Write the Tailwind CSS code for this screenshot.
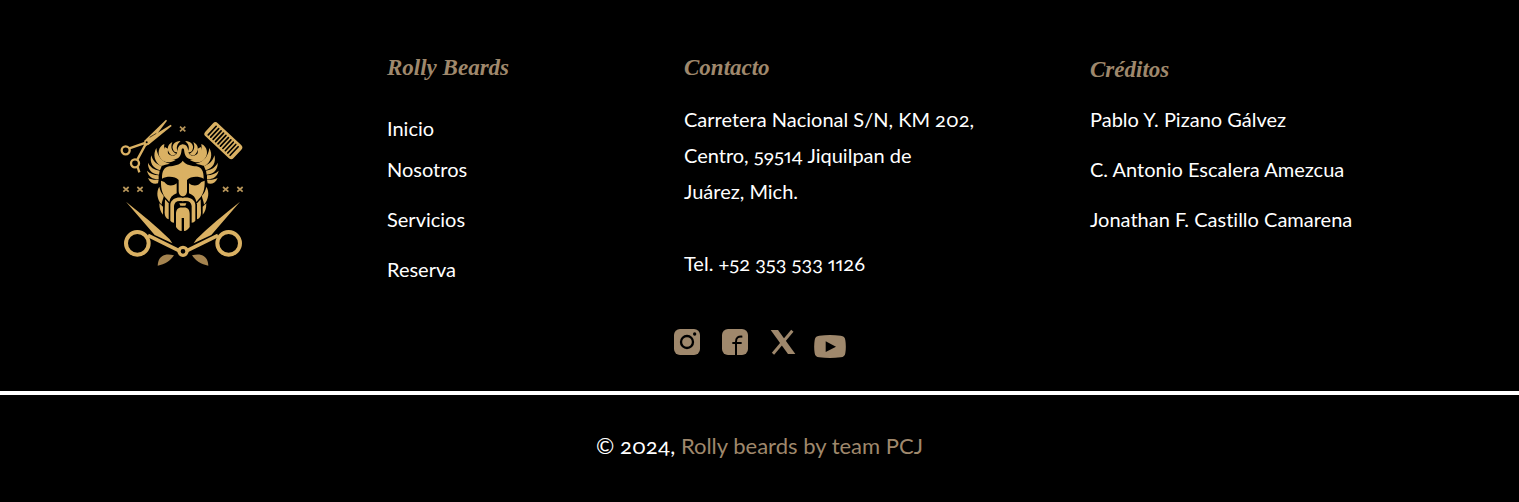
<!DOCTYPE html>
<html lang="es">
<head>
<meta charset="utf-8">
<meta name="viewport" content="width=device-width, initial-scale=1">
<title>Rolly Beards</title>
<script src="https://cdn.jsdelivr.net/npm/@tailwindcss/browser@4"></script>
</head>
<body class="min-h-screen bg-black font-['Lato','Noto_Sans',sans-serif] text-xl leading-9 text-white [font-variant-ligatures:none] [font-variant-numeric:oldstyle-nums_proportional-nums]">
<footer>
  <div class="grid grid-cols-[277fr_297fr_406fr_319fr] px-[110px] pt-12">
    <a href="#" aria-label="Rolly Beards" class="block pt-[62px]">
      <svg class="h-40 w-[145px]" viewBox="0 0 435 480" fill="#dab163" stroke="none">
        <defs>
          <g id="spark"><path d="M-8-7 8 7M8-7-8 7" stroke="#b8965a" stroke-width="5"/></g>
          <g id="half">
            <!-- hair -->
            <path d="M114 49C104 49 104 57 103 65C101 80 89 85 77 82C64 79 58 68 65 54" fill="none" stroke="#dab163" stroke-width="12"/>
            <path d="M106 33C90 33 79 45 84 58C86 67 94 69 99 65C92 54 96 43 106 34Z"/>
            <path d="M82 36C66 44 64 62 77 74C83 77 90 75 95 72C79 64 76 52 82 36Z"/>
            <path d="M58 42C40 49 35 73 49 88C58 100 77 99 92 90C66 86 54 66 58 42Z"/>
            <path d="M34 54C23 73 28 97 48 108C56 105 66 103 75 101C50 96 37 78 34 54Z"/>
            <path d="M19 76C13 97 23 115 45 121L50 109C33 102 23 92 19 76Z"/>
            <path d="M9 98C8 118 20 132 42 134L44 122C27 119 16 112 9 98Z"/>
            <path d="M6 122C10 139 22 148 41 148L41 136C26 135 15 131 6 122Z"/>
            <path d="M9 144C16 160 28 164 39 160L41 149C29 150 18 149 9 144Z"/>
            <!-- face -->
            <path d="M114 92C104 106 86 107 73 109C57 112 51 123 51 146C66 138 90 138 101 150V184C101 193 107 199 114 199Z"/>
            <path d="M48 152L58 156C68 170 84 169 95 160V190C82 195 75 203 73 216L66 208C54 196 47 180 48 152Z"/>
            <path d="M43 170C33 186 36 208 50 224C51 210 57 203 56 197C49 189 45 181 43 170Z"/>
            <!-- beard -->
            <path d="M43 220L54 230V254C47 246 43 236 43 220Z"/>
            <path d="M60 208L71 220V268C63 265 59 259 59 248Z"/>
            <path d="M114 204C98 199 77 207 76 224V272C79 276 82 277 87 278V228C88 215 98 210 114 214Z"/>
            <path d="M103 220H114V227H106Z"/>
            <path d="M114 233C99 231 93 239 93 253V291C97 298 103 303 110 303V264H114Z"/>
          </g>
          <g id="shear">
            <path d="M48 275L134 375L187 400L179 388C141 349 98 316 48 275Z"/>
            <path d="M114 376L207 422" stroke="#dab163" stroke-width="11" fill="none"/>
            <circle cx="82" cy="400" r="34" fill="none" stroke="#dab163" stroke-width="12"/>
            <path d="M143 467C144 440 162 427 192 436C183 451 164 464 143 467Z" fill="#a58450"/>
          </g>
        </defs>
        <g transform="translate(105 60)"><use href="#half"/><use href="#half" transform="matrix(-1 0 0 1 227 0)"/></g>
        <use href="#shear"/><use href="#shear" transform="matrix(-1 0 0 1 438 0)"/>
        <circle cx="219" cy="424" r="12" fill="#000" stroke="#dab163" stroke-width="10"/>
        <use href="#spark" x="218" y="57"/><use href="#spark" x="48" y="238"/><use href="#spark" x="90" y="238"/><use href="#spark" x="347" y="238"/><use href="#spark" x="390" y="238"/>
        <!-- small scissors -->
        <g fill="none" stroke="#dab163" stroke-width="7">
          <circle cx="47" cy="121" r="12"/><circle cx="75" cy="160" r="12"/>
          <path d="M58 115L110 97M82 149L110 97M83 171L88 187"/>
        </g>
        <path d="M102 93L168 29L171 32L121 99L109 108Z"/><path d="M107 91L182 44L185 48L115 105Z"/>
        <path d="M119 82L139 70" stroke="#000" stroke-width="2"/><circle cx="110" cy="97" r="3" fill="#000"/>
        <!-- comb -->
        <g transform="translate(340 92) rotate(43)">
          <rect x="-58" y="-27" width="116" height="54" rx="10"/>
          <path d="M-45-17V18M-35-17V18M-25-17V18M-15-17V18M-5-17V18M5-17V18M15-17V18M25-17V18M35-17V18M45-17V18" stroke="#000" stroke-width="5" stroke-linecap="round"/>
        </g>
      </svg>
    </a>
    <nav aria-labelledby="brand">
      <h2 id="brand" class="pt-0.5 font-['Liberation_Serif',serif] text-[23px] leading-9 font-bold text-[#9f886c] italic">Rolly Beards</h2>
      <ul class="pt-6">
        <li><a href="#">Inicio</a></li>
        <li class="pt-[5px]"><a href="#">Nosotros</a></li>
        <li class="pt-3.5"><a href="#">Servicios</a></li>
        <li class="pt-3.5"><a href="#">Reserva</a></li>
      </ul>
    </nav>
    <section>
      <h2 class="pt-0.5 font-['Liberation_Serif',serif] text-[23px] leading-9 font-bold text-[#9f886c] italic">Contacto</h2>
      <address class="pt-[15px] not-italic">Carretera Nacional S/N, KM 202,<br>Centro, 59514 Jiquilpan de<br>Juárez, Mich.<br><br>Tel. +52 353 533 1126</address>
    </section>
    <section>
      <h2 class="pt-1 font-['Liberation_Serif',serif] text-[23px] leading-9 font-bold text-[#9f886c] italic">Créditos</h2>
      <ul class="flex flex-col gap-3.5 pt-[13px] whitespace-nowrap">
        <li>Pablo Y. Pizano Gálvez</li>
        <li>C. Antonio Escalera Amezcua</li>
        <li>Jonathan F. Castillo Camarena</li>
      </ul>
    </section>
  </div>
  <div class="flex justify-center gap-[22px] pt-[42px] text-[#9f886c]">
    <a href="#" aria-label="Instagram"><svg class="size-[26px]" viewBox="0 0 78 78"><rect width="78" height="78" rx="18" fill="currentColor"/><circle cx="39" cy="39" r="18" fill="none" stroke="#000" stroke-width="7"/><circle cx="62" cy="15" r="5"/></svg></a>
    <a href="#" aria-label="Facebook"><svg class="size-[26px]" viewBox="0 0 78 78"><rect width="78" height="78" rx="18" fill="currentColor"/><path d="M42 78V38C42 26 48 22 61 23M31 42H59" fill="none" stroke="#000" stroke-width="6"/></svg></a>
    <a href="#" aria-label="X"><svg class="size-[26px]" viewBox="0 0 78 78" fill="none" stroke="currentColor"><path d="M67 5L9 74" stroke-width="9"/><path d="M2 3H24L76 75H54Z" fill="currentColor" stroke="none"/></svg></a>
    <a href="#" aria-label="YouTube" class="-ml-1 pt-1.5"><svg class="h-[23px] w-8" viewBox="0 0 96 69"><path d="M16 2Q48-2 80 2Q93 3 94 16Q97 35 94 54Q93 66 80 67Q48 71 16 67Q3 66 2 54Q-1 35 2 16Q3 3 16 2Z" fill="currentColor"/><path d="M35 19V51L66 35Z"/></svg></a>
  </div>
  <div class="mt-[33px] border-t-4 border-white pt-[33px] text-center text-[22px] leading-9">
    <p>© 2024, <a href="#" class="text-[#9f886c]">Rolly beards by team PCJ</a></p>
  </div>
</footer>
</body>
</html>
